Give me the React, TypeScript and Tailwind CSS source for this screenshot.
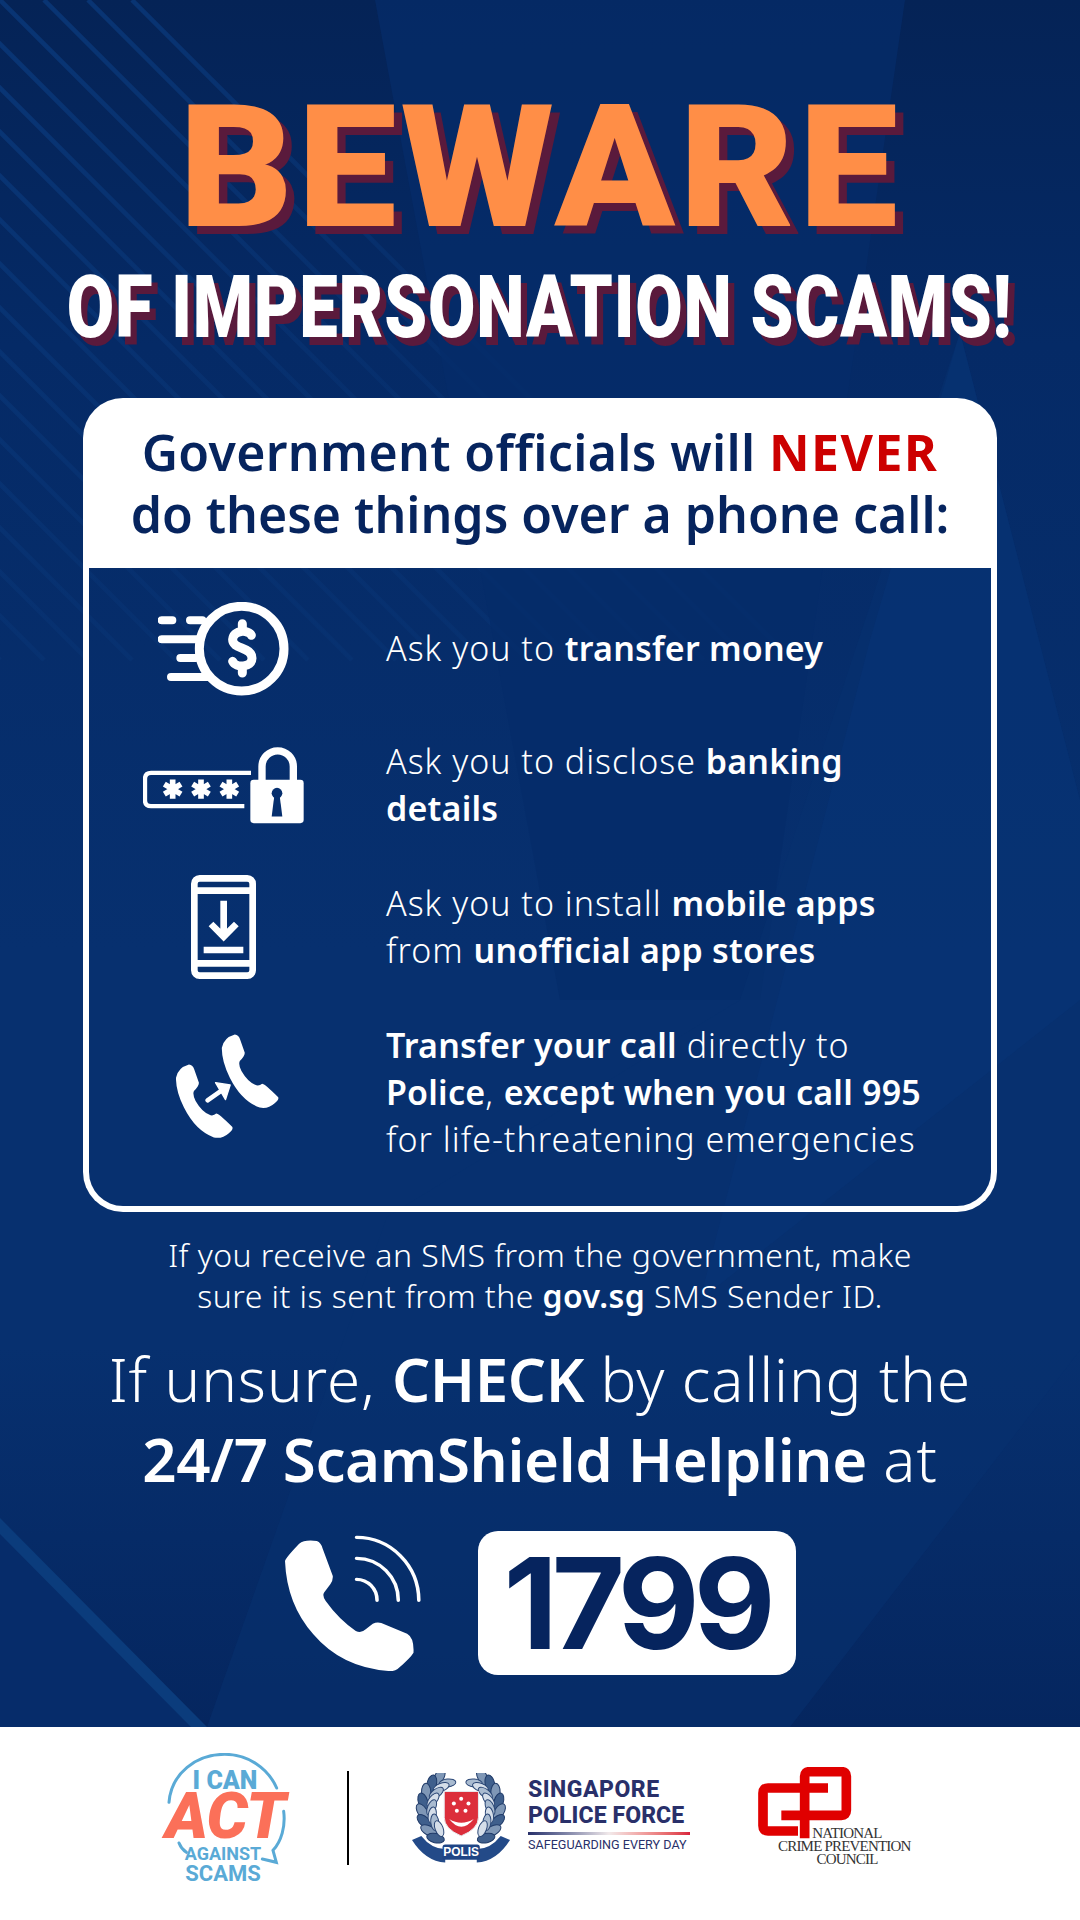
import React from "react";

const sans = "font-['Noto_Sans',sans-serif]";

function Background() {
  const stripes = [];
  for (let i = -15; i < 4; i++) {
    stripes.push(<line key={i} x1={i * 44} y1={0} x2={i * 44 + 660} y2={660} strokeWidth="4.5" />);
  }
  return (
    <svg className="absolute inset-0" width="1080" height="1727" viewBox="0 0 1080 1727">
      <defs>
        <linearGradient id="bg" x1="0" y1="0" x2="0" y2="1">
          <stop offset="0" stopColor="#052356" />
          <stop offset="0.2" stopColor="#052a66" />
          <stop offset="0.55" stopColor="#07306f" />
          <stop offset="0.78" stopColor="#07306f" />
          <stop offset="1" stopColor="#05265f" />
        </linearGradient>
        <linearGradient id="fade" gradientUnits="userSpaceOnUse" x1="40" y1="60" x2="330" y2="420">
          <stop offset="0" stopColor="#0a3a7d" stopOpacity="0.75" />
          <stop offset="1" stopColor="#0a3a7d" stopOpacity="0.3" />
        </linearGradient>
      </defs>
      <rect width="1080" height="1727" fill="url(#bg)" />
      <g stroke="url(#fade)">{stripes}</g>
      <polygon points="375,0 905,0 760,1000 560,1000" fill="#062c6a" opacity="0.75" />
      <polygon points="960,332 1080,800 1080,1350 790,1727 207,1727 387,1217 740,1000" fill="#07326f" opacity="0.55" />
      <polygon points="960,332 1080,800 1080,1000 700,1300 870,640" fill="#08367b" opacity="0.35" />
      <polygon points="0,1518 207,1727 0,1727" fill="#0b3c7c" />
      <polygon points="0,1534 191,1727 0,1727" fill="#062c6a" />
    </svg>
  );
}

function MoneyIcon() {
  return (
    <svg width="131" height="94" viewBox="112 93 393 282" fill="none" stroke="white" strokeLinecap="round" strokeLinejoin="round">
      <g strokeWidth="24">
        <path d="M123 148H155M208 148H245M123 205H240M179 261H225M151 318H265" />
      </g>
      <circle cx="363" cy="233" r="127" strokeWidth="27" />
      <path strokeWidth="27" d="M392 193C385 176 338 175 336 205C334 236 394 226 394 262C394 290 345 292 336 271M365 158V170M365 295V306" />
    </svg>
  );
}

function LockIcon() {
  return (
    <svg width="161" height="77" viewBox="66 530 483 230" fill="none">
      <path d="M390 607H90Q72 607 72 625V690Q72 707 90 707H370" stroke="white" strokeWidth="13" />
      {[155, 240, 325].map((x) => (
        <path key={x} d={`M${x} 627V685M${x - 25} 641L${x + 25} 671M${x + 25} 641L${x - 25} 671`} stroke="white" strokeWidth="17" />
      ))}
      <path d="M423 635V588A47 47 0 0 1 517 588V635" stroke="white" strokeWidth="22" />
      <rect x="388" y="628" width="160" height="130" rx="10" fill="white" />
      <circle cx="468" cy="668" r="16" fill="#062f6e" />
      <polygon points="460,676 476,676 484,738 452,738" fill="#062f6e" />
    </svg>
  );
}

function AppIcon() {
  return (
    <svg width="65" height="104" viewBox="150 75 195 312" fill="none" stroke="white" strokeWidth="20">
      <rect x="160" y="85" width="175" height="292" rx="16" />
      <path d="M160 122H335M160 340H335M248 152V255M210 222L248 260L286 222M188 300H307" />
    </svg>
  );
}

const handset =
  "M241 590Q246 560 280 550Q292 552 296 565L310 605Q310 615 295 630Q290 640 300 660Q320 695 345 703Q355 705 362 698Q370 698 410 738Q415 745 400 757Q380 775 355 770Q300 750 265 680Q240 630 241 590Z";

function TransferIcon() {
  return (
    <svg width="103" height="104" viewBox="103 549 310 312" fill="white" className="relative left-[4px] -top-[7px]">
      <path d={handset} />
      <path d={handset} transform="translate(-138 90)" />
      <path d="M198 748L245 715" stroke="white" strokeWidth="14" strokeLinecap="round" />
      <polygon points="222,695 266,702 252,746" stroke="white" strokeWidth="4" strokeLinejoin="round" />
    </svg>
  );
}

function HelplinePhone() {
  return (
    <svg width="137" height="136" viewBox="70 72 387 408" preserveAspectRatio="none">
      <path
        fill="white"
        d="M70 150Q72 140 110 98Q125 85 160 90Q172 95 176 112L205 195Q206 208 198 220L180 245Q175 255 185 270Q222 325 270 360Q285 368 298 355L318 338Q330 332 342 336L415 368Q435 380 433 425Q425 440 388 474Q378 482 362 480Q230 470 150 370Q75 280 70 150Z"
      />
      <path
        fill="none"
        stroke="white"
        strokeWidth="10"
        strokeLinecap="round"
        d="M272 79A176 190 0 0 1 448 268M272 142A118 126 0 0 1 390 268M272 205A58 63 0 0 1 330 268"
      />
    </svg>
  );
}

function IcanLogo() {
  return (
    <div className="relative w-[124px] h-[130px] shrink-0 font-['Roboto',sans-serif] text-center pt-[18px] mt-[26px]">
      <svg className="absolute inset-0" width="124" height="130" viewBox="70 70 372 390" fill="none" stroke="#5aaad6" strokeWidth="9" strokeLinecap="round">
        <path d="M88 218C95 130 170 74 255 74C325 74 385 115 411 175" />
        <path d="M432 245C438 290 425 335 400 362L410 398L368 388M118 340Q125 358 140 368" />
      </svg>
      <div className="relative h-[20px] text-[25px] leading-[20px] font-black text-[#5aaad6]">I CAN</div>
      <div className="relative h-[50px] text-[65px] leading-[50px] font-black italic text-[#fb7059] -tracking-[1px]">ACT</div>
      <div className="relative w-[120px] mt-[5px] h-[15px] text-[18px] leading-[15px] font-bold text-[#5aaad6]">AGAINST</div>
      <div className="relative w-[120px] mt-[4px] h-[17px] text-[22px] leading-[17px] font-bold text-[#5aaad6]">SCAMS</div>
    </div>
  );
}

function PoliceBadge() {
  const angles = [236, 221, 206, 191, 176, 161, 146, 131];
  const cx = 147;
  const cy = 105;
  const toPoint = (a: number, r: number) => [cx + r * Math.cos((a * Math.PI) / 180), cy + r * Math.sin((a * Math.PI) / 180)];
  return (
    <svg width="98" height="92" viewBox="0 0 295 270" className="shrink-0 mt-[46px]">
      {[1, -1].map((side) => (
        <g key={side} transform={side < 0 ? "translate(294 0) scale(-1 1)" : undefined}>
          {angles.map((a, i) => {
            const [x1, y1] = toPoint(a, 116);
            const [x2, y2] = toPoint(a + 7, 88);
            return (
              <g key={a}>
                <ellipse cx={x1} cy={y1} rx="14" ry="27" fill={i % 2 ? "#3f5f8c" : "#7f97b6"} stroke="#1f3a68" strokeWidth="3" transform={`rotate(${a - 28} ${x1} ${y1})`} />
                <ellipse cx={x2} cy={y2} rx="12" ry="25" fill={i % 2 ? "#d5dee9" : "#a9bbd0"} stroke="#2b4776" strokeWidth="3" transform={`rotate(${a + 28} ${x2} ${y2})`} />
              </g>
            );
          })}
        </g>
      ))}
      <path d="M97 52H200V130Q200 165 148 186Q97 165 97 130Z" fill="#dc2e3b" stroke="#e6e9ee" strokeWidth="3" />
      <path d="M112 135Q148 182 186 135Q148 158 112 135Z" fill="white" />
      <g fill="white">
        <circle cx="148" cy="74" r="6" />
        <circle cx="170" cy="88" r="6" />
        <circle cx="161" cy="110" r="6" />
        <circle cx="135" cy="110" r="6" />
        <circle cx="126" cy="88" r="6" />
      </g>
      <path d="M0 198L28 186Q60 226 100 225V266Q40 262 0 198Z" fill="#234a88" />
      <path d="M295 198L267 186Q235 226 195 225V266Q255 262 295 198Z" fill="#234a88" />
      <rect x="92" y="212" width="112" height="46" rx="8" fill="#1f4585" />
      <text x="148" y="247" textAnchor="middle" fontSize="36" fontWeight="700" fill="white" fontFamily="Liberation Sans, sans-serif">POLIS</text>
    </svg>
  );
}

function SpfText() {
  return (
    <div className="w-[162px] mt-[50px] shrink-0 font-['Roboto',sans-serif] text-[#29306a]">
      <div className="text-[23px] leading-[26px] font-extrabold tracking-[0.5px]">SINGAPORE</div>
      <div className="text-[23px] leading-[26px] font-extrabold tracking-[0.1px] whitespace-nowrap">POLICE FORCE</div>
      <div className="h-[3px] mt-[3px] bg-gradient-to-r from-[#29306a] via-[#f1e9ea] to-[#d9203d]" />
      <div className="text-[12.6px] leading-[16px] mt-[2px] whitespace-nowrap">SAFEGUARDING EVERY DAY</div>
    </div>
  );
}

function NcpcLogo() {
  return (
    <div className="w-[152px] mt-[40px] shrink-0 flex flex-col items-start">
      <svg width="94" height="72" viewBox="715 82 282 216" fill="none" stroke="#e00000" strokeWidth="29">
        <path d="M925 145H745Q730 145 730 160V258Q730 274 745 274H835" />
        <path d="M855 296V110Q855 96 870 96H965Q980 96 980 110V212Q980 227 965 227H785" />
      </svg>
      <div className="-mt-[12px] ml-[20px] w-[130px] font-['Liberation_Serif',serif] text-[15px] leading-[13px] tracking-[-0.8px] text-[#333] text-center whitespace-nowrap">
        <div className="pl-[8px]">NATIONAL</div>
        <div>CRIME PREVENTION</div>
        <div className="pl-[8px]">COUNCIL</div>
      </div>
    </div>
  );
}

function Row({ icon, className, children }: { icon: React.ReactNode; className: string; children: React.ReactNode }) {
  return (
    <div className={`flex items-center ${className}`}>
      <div className="w-[268px] flex justify-center shrink-0">{icon}</div>
      <div className="ml-[29px] text-[34px] leading-[47px] font-light tracking-[1px] text-white whitespace-nowrap [&_b]:font-semibold [&_b]:tracking-[0.2px]">
        {children}
      </div>
    </div>
  );
}

export default function App() {
  return (
    <div className={`relative w-[1080px] h-[1920px] overflow-hidden bg-white ${sans}`}>
      <Background />
      <main className="relative h-[1727px] flex flex-col items-center">
        <h1 className="mt-[83px] h-[170px] font-['Roboto',sans-serif] font-black text-[170px] leading-[170px] tracking-[4px] text-[#ff8e47] [text-shadow:8px_8px_0_#5a1a3c] whitespace-nowrap scale-x-[1.04]">
          BEWARE
        </h1>
        <h2 className="mt-[6px] h-[96px] font-['Roboto',sans-serif] font-black text-[87px] leading-[96px] text-white [text-shadow:8px_8px_0_#5a1a3c] whitespace-nowrap scale-x-[0.79] tracking-[1px]">
          OF IMPERSONATION SCAMS!
        </h2>

        <section className="mt-[43px] w-[914px]">
          <div className="h-[170px] rounded-t-[40px] bg-white flex flex-col items-center justify-center text-[50px] leading-[62px] font-semibold text-[#06245e]">
            <div className="tracking-[0.35px]">
              Government officials will <span className="font-bold tracking-[1.5px] text-[#cc0000]">NEVER</span>
            </div>
            <div>do these things over a phone call:</div>
          </div>
          <div className="h-[644px] border-x-[6px] border-b-[6px] border-white rounded-b-[40px] pt-[57px]">
            <Row icon={<MoneyIcon />} className="h-[47px]">
              Ask you to <b>transfer money</b>
            </Row>
            <Row icon={<LockIcon />} className="h-[94px] mt-[66px]">
              Ask you to disclose <b>banking</b>
              <br />
              <b>details</b>
            </Row>
            <Row icon={<AppIcon />} className="h-[94px] mt-[48px]">
              Ask you to install <b>mobile apps</b>
              <br />
              from <b>unofficial app stores</b>
            </Row>
            <Row icon={<TransferIcon />} className="h-[141px] mt-[48px]">
              <b>Transfer your call</b> directly to
              <br />
              <b>Police</b>, <b>except when you call 995</b>
              <br />
              for life-threatening emergencies
            </Row>
          </div>
        </section>

        <p className="mt-[22px] text-center text-[32px] leading-[41px] font-light tracking-[0.45px] text-white [&_b]:font-semibold">
          If you receive an SMS from the government, make
          <br />
          sure it is sent from the <b>gov.sg</b> SMS Sender ID.
        </p>
        <p className="mt-[23px] text-center text-[60px] leading-[80px] font-light tracking-[0.9px] text-white [&_b]:font-semibold [&_b]:-tracking-[0.4px]">
          If unsure, <b>CHECK</b> by calling the
          <br />
          <b>24/7 ScamShield Helpline</b> at
        </p>
        <div className="mt-[32px] flex items-center">
          <HelplinePhone />
          <div className="ml-[56px] w-[318px] h-[144px] rounded-[20px] bg-white flex items-center justify-center font-['Inter',sans-serif] font-bold text-[126px] leading-none -tracking-[6px] text-[#06245e]">
            1799
          </div>
        </div>
      </main>
      <footer className="relative h-[193px] bg-white flex items-start pl-[163px]">
        <IcanLogo />
        <div className="ml-[60px] mt-[44px] w-[2px] h-[94px] bg-black shrink-0" />
        <div className="ml-[63px]">
          <PoliceBadge />
        </div>
        <div className="ml-[18px]">
          <SpfText />
        </div>
        <div className="ml-[68px]">
          <NcpcLogo />
        </div>
      </footer>
    </div>
  );
}
